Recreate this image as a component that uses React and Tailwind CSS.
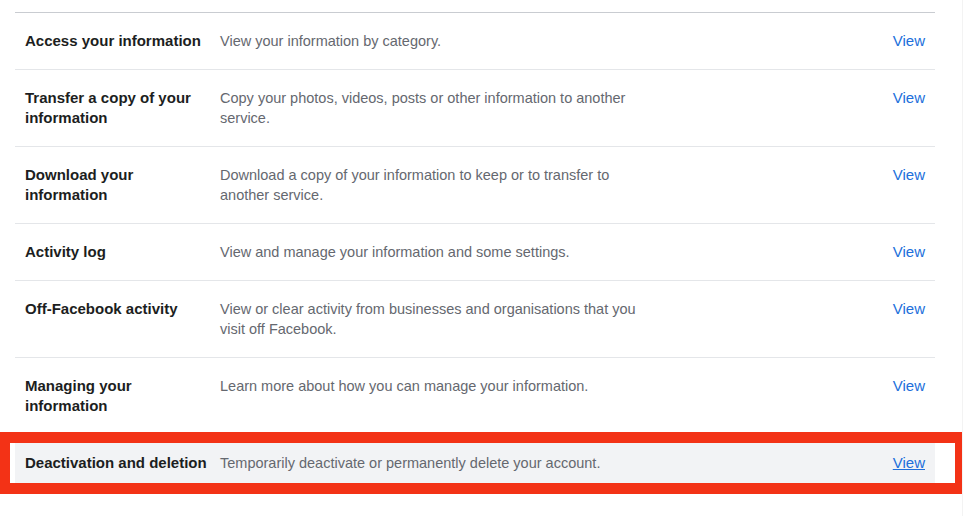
const rows = [
  { title: 'Access your information', desc: 'View your information by category.' },
  { title: 'Transfer a copy of your information', desc: 'Copy your photos, videos, posts or other information to another service.' },
  { title: 'Download your information', desc: 'Download a copy of your information to keep or to transfer to another service.' },
  { title: 'Activity log', desc: 'View and manage your information and some settings.' },
  { title: 'Off-Facebook activity', desc: 'View or clear activity from businesses and organisations that you visit off Facebook.' },
  { title: 'Managing your information', desc: 'Learn more about how you can manage your information.' },
  { title: 'Deactivation and deletion', desc: 'Temporarily deactivate or permanently delete your account.', active: true },
];

function Row({ title, desc, active, first }) {
  return (
    <div className={`flex items-start py-[18px] px-[10px] ${first ? '' : 'border-t border-[#e4e6e9]'} ${active ? 'bg-[#f2f3f5]' : ''}`}>
      <div className="w-[195px] shrink-0 pr-[8px] text-[15px] leading-5 font-bold text-[#1c1e21]">{title}</div>
      <div className="w-[430px] text-[14.5px] leading-5 text-[#65686f]">{desc}</div>
      <div className="flex-1" />
      <a href="#" className={`text-[15px] leading-5 text-[#216fdb] ${active ? 'underline' : ''}`}>View</a>
    </div>
  );
}

export default function App() {
  return (
    <div className="relative w-[963px] h-[516px] bg-white overflow-hidden border-r border-[#f3f3f3]" style={{ fontFamily: '"Liberation Sans", Arial, sans-serif' }}>
      <div className="pt-[12px] pl-[15px] w-[935px]">
        <div className="border-t border-[#c9ccd1]">
          {rows.map((r, i) => (
            <Row key={r.title} first={i === 0} {...r} />
          ))}
        </div>
      </div>
      {/* annotation box */}
      <div className="absolute left-[-1px] top-[432px] w-[967px] h-[62px] border-[11px] border-[#f33216] pointer-events-none" />
    </div>
  );
}
